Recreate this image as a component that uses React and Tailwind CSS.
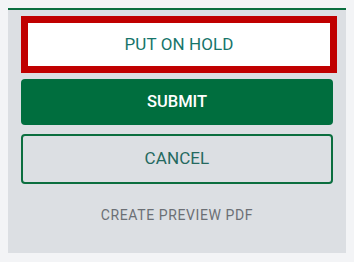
export default function App() {
    return (
        <div className="h-[262px] w-[354px] bg-[#f3f4f6] p-2" style={{ fontFamily: 'Roboto, "Liberation Sans", sans-serif' }}>
            <div className="flex h-[245px] flex-col border-t-2 border-[#0b6e3f] bg-[#dcdfe3] px-[13px] pt-[6px]">
                <button className="flex h-[57px] w-[316px] items-center justify-center border-[7px] border-[#c00000] bg-white text-[17px] tracking-[0.1px] text-[#17756a]">
                    PUT ON HOLD
                </button>
                <button className="mt-[6px] flex h-[46px] w-full items-center justify-center rounded-[4px] bg-[#006e3e] text-[16.5px] font-medium text-white">
                    SUBMIT
                </button>
                <button className="mt-[9px] flex h-[50px] w-full items-center justify-center rounded-[4px] border-2 border-[#0b6e3f] text-[17px] tracking-[0.1px] text-[#25695f]">
                    CANCEL
                </button>
                <button className="mt-[21px] text-center text-[14px] leading-5 tracking-[0.6px] text-[#6b6f75]">
                    CREATE PREVIEW PDF
                </button>
            </div>
        </div>
    )
}
